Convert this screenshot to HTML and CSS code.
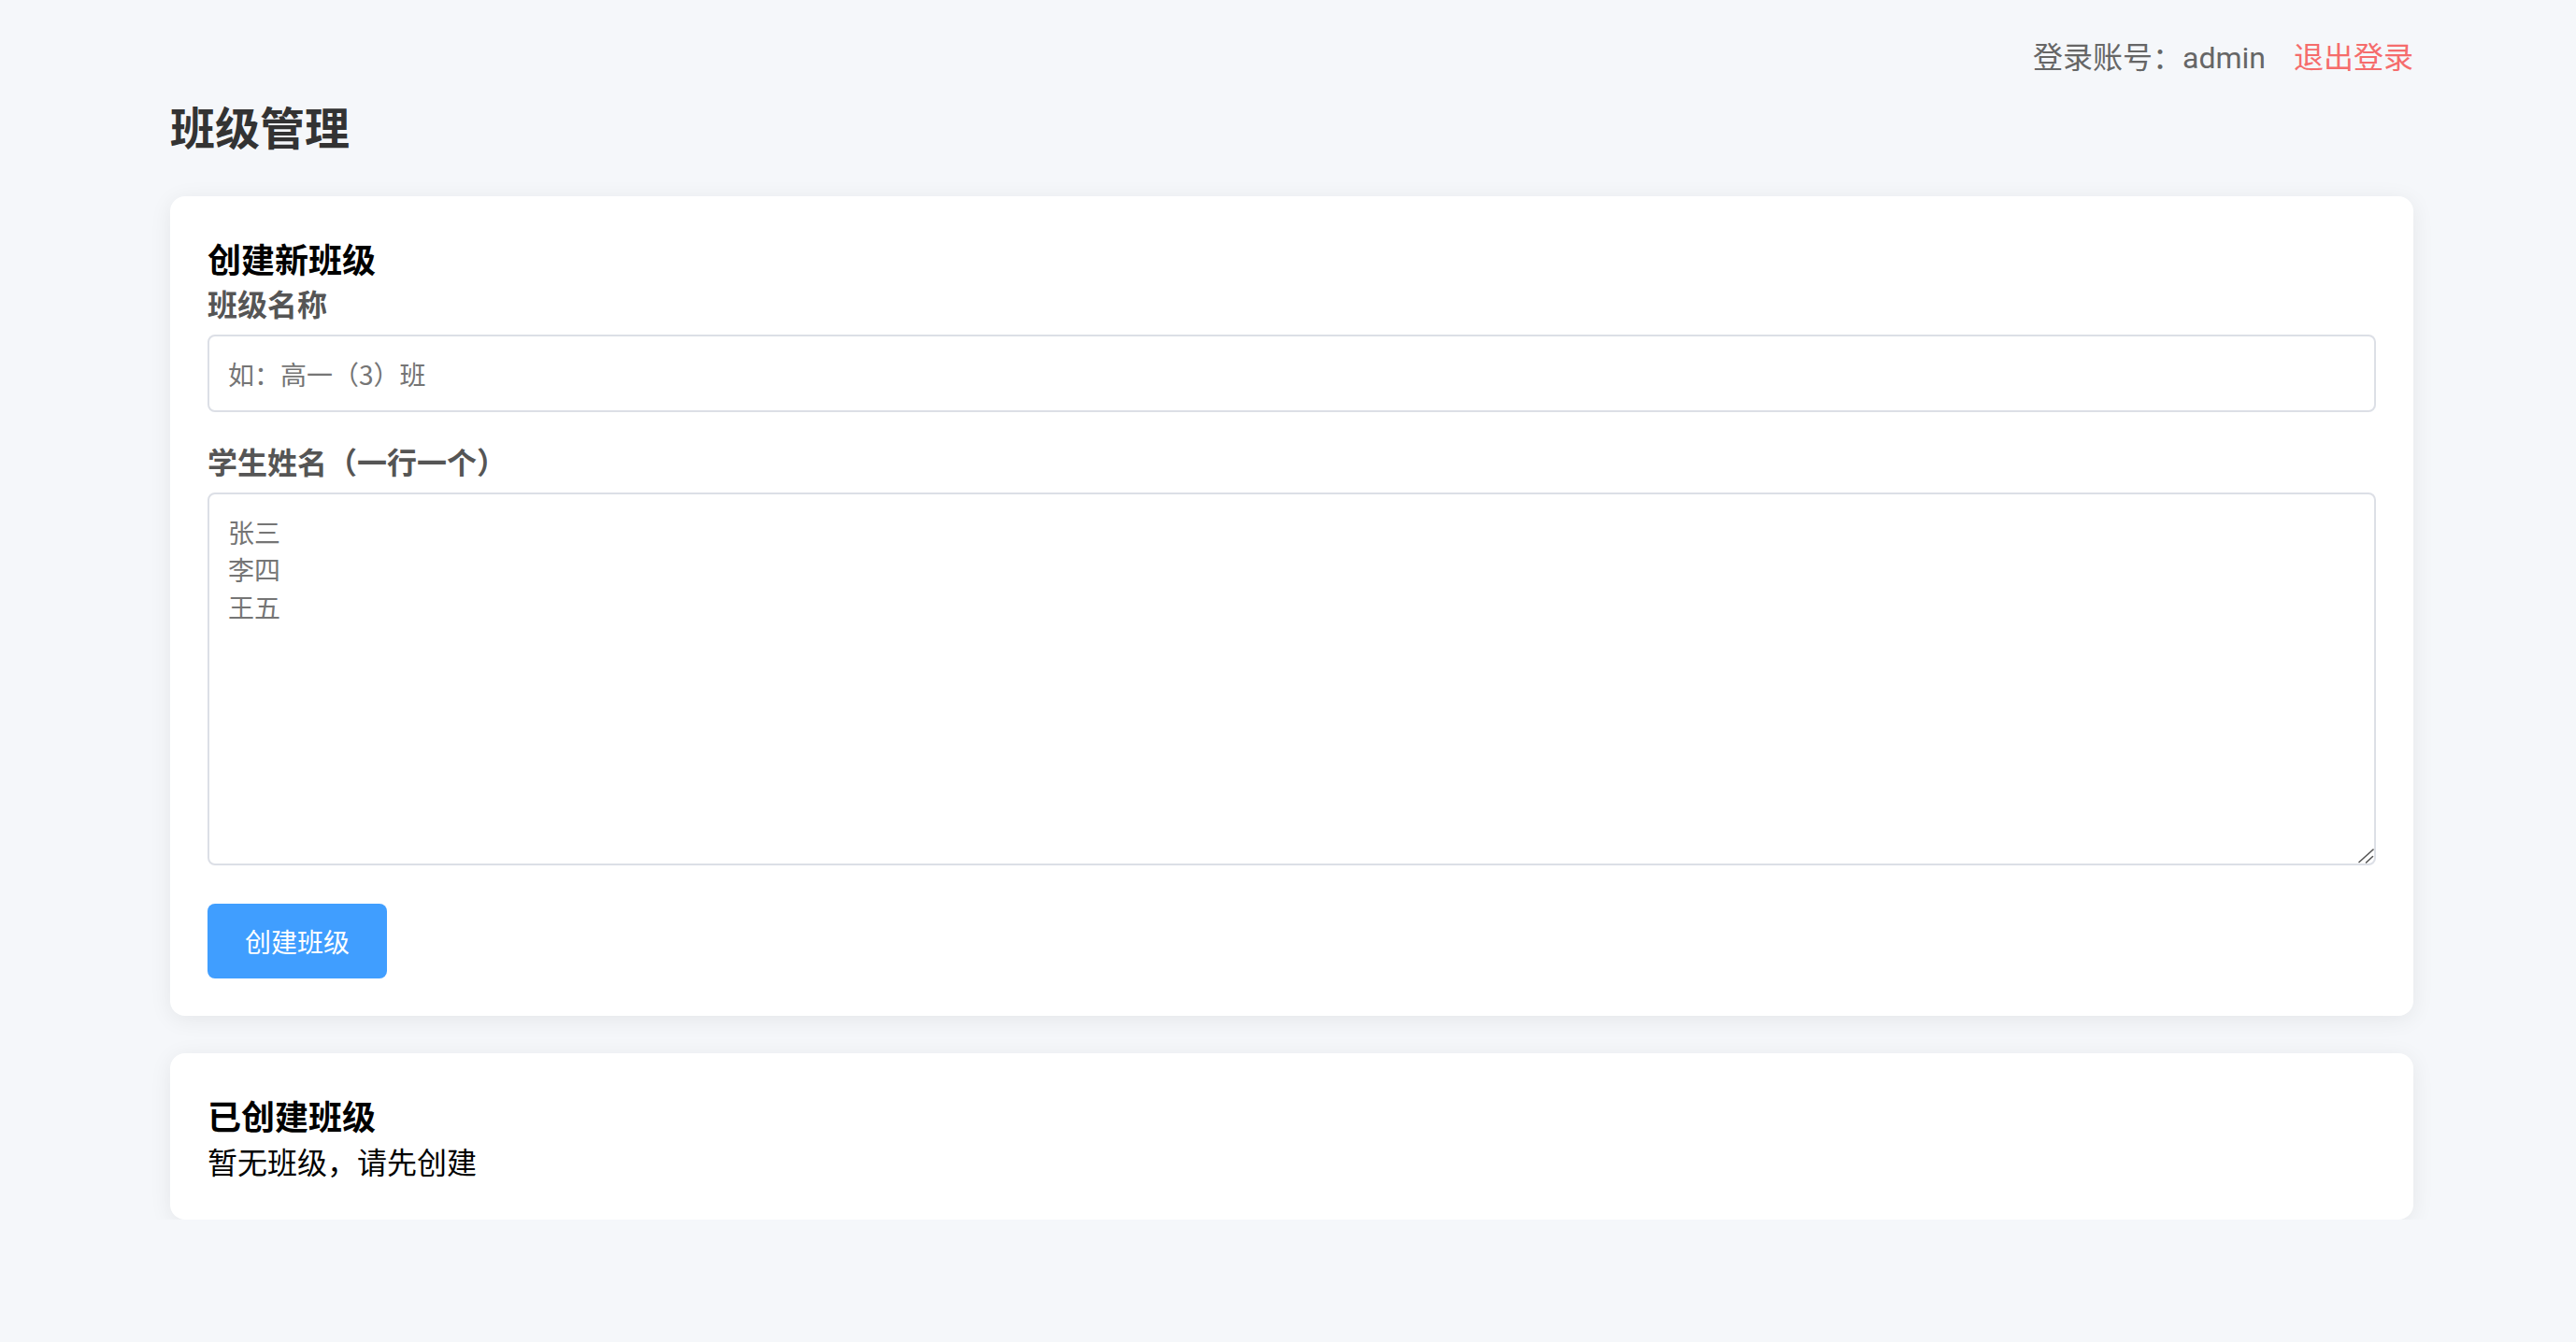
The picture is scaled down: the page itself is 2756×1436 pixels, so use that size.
FILE: index.html
```html
<!DOCTYPE html>
<html lang="zh-CN">
<head>
<meta charset="utf-8">
<title>班级管理</title>
<link rel="stylesheet" href="styles.css">
</head>
<body>
<div class="page">
  <header class="topbar">
    <span class="account">登录账号：<span class="account-name">admin</span></span>
    <a class="logout" href="#">退出登录</a>
  </header>

  <h1 class="page-title">班级管理</h1>

  <section class="card">
    <h3 class="card-title">创建新班级</h3>
    <label class="field-label" for="className">班级名称</label>
    <input class="text-input" id="className" type="text" placeholder="如：高一（3）班">

    <label class="field-label field-label--spaced" for="students">学生姓名（一行一个）</label>
    <div class="textarea-wrap">
      <textarea class="text-area" id="students" placeholder="张三&#10;李四&#10;王五"></textarea>
      <svg class="grip" width="24" height="24" viewBox="0 0 24 24" aria-hidden="true">
        <line x1="6" y1="20.5" x2="21" y2="7" stroke="#555" stroke-width="1.6" stroke-linecap="round"/>
        <line x1="13.5" y1="21" x2="20.5" y2="14.5" stroke="#555" stroke-width="1.6" stroke-linecap="round"/>
      </svg>
    </div>

    <button class="btn-primary" type="button">创建班级</button>
  </section>

  <section class="card card--list">
    <h3 class="card-title">已创建班级</h3>
    <p class="empty-text">暂无班级，请先创建</p>
  </section>
</div>
</body>
</html>
```

FILE: styles.css
```css
html, body {
  margin: 0;
  padding: 0;
}

body {
  background: #f5f7fa;
  font-family: "Noto Sans CJK SC", "Noto Sans", sans-serif;
  color: #000;
}

.page {
  width: 2400px;
  margin-left: 182px;
  padding-top: 36px;
}

.topbar {
  display: flex;
  justify-content: flex-end;
  align-items: center;
  height: 46px;
  font-size: 32px;
  line-height: 46px;
  color: #666;
}

.account-name {
  font-family: Roboto, "Noto Sans CJK SC", sans-serif;
  line-height: 1;
}

.logout {
  margin-left: 30px;
  color: #f56c6c;
  text-decoration: none;
}

.page-title {
  margin: 17px 0 41px;
  font-size: 48px;
  line-height: 70px;
  font-weight: 700;
  color: #333;
}

.card {
  background: #fff;
  border-radius: 16px;
  box-shadow: 0 4px 24px rgba(0, 0, 0, 0.07);
  padding: 40px;
}

.card--list {
  margin-top: 40px;
}

.card-title {
  margin: 0;
  font-size: 36px;
  line-height: 52px;
  font-weight: 700;
  color: #000;
}

.field-label {
  display: block;
  margin-bottom: 12px;
  font-size: 32px;
  line-height: 44px;
  font-weight: 700;
  color: #555;
}

.field-label--spaced {
  margin-top: 30px;
}

.text-input,
.text-area {
  display: block;
  box-sizing: border-box;
  width: 100%;
  border: 2px solid #dcdfe6;
  border-radius: 8px;
  padding: 0 20px;
  font-family: "Noto Sans CJK SC", sans-serif;
  font-size: 28px;
  color: #333;
  background: #fff;
  outline: none;
}

.text-input {
  height: 83px;
}

.text-area {
  height: 399px;
  padding: 20px;
  line-height: 40px;
  resize: none;
}

.text-input::placeholder,
.text-area::placeholder {
  color: #757575;
  opacity: 1;
}

.textarea-wrap {
  position: relative;
}

.grip {
  position: absolute;
  right: 0;
  bottom: 0;
}

.btn-primary {
  display: block;
  margin-top: 41px;
  height: 80px;
  padding: 0 40px;
  border: none;
  border-radius: 8px;
  background: #409eff;
  color: #fff;
  font-family: "Noto Sans CJK SC", sans-serif;
  font-size: 28px;
  cursor: pointer;
}

.empty-text {
  margin: 0;
  font-size: 32px;
  line-height: 46px;
  color: #000;
}
```
